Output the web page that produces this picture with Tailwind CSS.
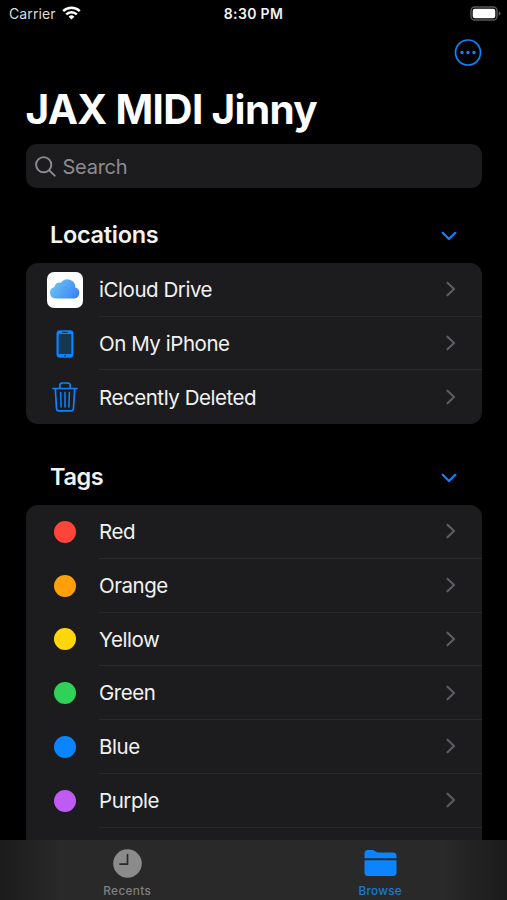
<!DOCTYPE html>
<html lang="en">
  <head>
    <meta charset="UTF-8" />
    <meta name="viewport" content="width=device-width, initial-scale=1.0" />
    <title>JAX MIDI Jinny</title>
    <script src="https://cdn.jsdelivr.net/npm/@tailwindcss/browser@4"></script>
  </head>
  <body class="bg-black">
    <!-- Shared icons -->
    <svg class="hidden">
      <symbol id="chevron-right" viewBox="0 0 10 16">
        <path d="M1.500 1.700 8 8l-6.500 6.300" fill="none" stroke="currentColor" stroke-width="2.200" stroke-linecap="round" stroke-linejoin="round" />
      </symbol>
      <symbol id="chevron-down" viewBox="0 0 16 10">
        <path d="M1.700 1.800 8 8l6.300-6.200" fill="none" stroke="currentColor" stroke-width="2.200" stroke-linecap="round" stroke-linejoin="round" />
      </symbol>
    </svg>

    <div class="flex h-[900px] w-[507px] flex-col overflow-hidden bg-black font-[Inter,sans-serif] text-[#f2f2f2]">
      <!-- Status bar -->
      <header class="grid h-7 shrink-0 grid-cols-3 items-center pr-[6px] pl-[9px] text-[14px] leading-none">
        <div class="flex items-center gap-[6px]">
          <span class="tracking-[0.1px] text-[#dcdcdc]">Carrier</span>
          <svg class="-mt-[2px] h-[14px] w-[19px]" viewBox="0 0 19 14" fill="none" stroke="white" stroke-width="2.400">
            <path d="M1.200 5.200a11.800 11.800 0 0 1 16.600 0" />
            <path d="M4.200 8.400a7.500 7.500 0 0 1 10.600 0" />
            <path d="M9.500 13.600 6.600 10.700a4.100 4.100 0 0 1 5.800 0z" fill="white" stroke="none" />
          </svg>
        </div>
        <span class="pr-[3px] text-center font-semibold tracking-[0.350px] whitespace-nowrap">8:30 PM</span>
        <svg class="-mt-px h-[15px] w-[31px] justify-self-end" viewBox="0 0 31 15">
          <rect x="1" y="1" width="26" height="13" rx="3.800" fill="none" stroke="#5a5a5a" stroke-width="1.400" />
          <rect x="2.700" y="2.700" width="22.600" height="9.600" rx="2.200" fill="white" />
          <path d="M28.600 5.200q2 .9 2 2.300t-2 2.300z" fill="#5a5a5a" />
        </svg>
      </header>

      <main class="min-h-0 flex-1 overflow-hidden px-[25.500px]">
        <div class="flex h-[50px] items-center justify-end">
          <svg class="h-7 w-7" viewBox="0 0 28 28">
            <circle cx="14" cy="13.500" r="12.500" fill="none" stroke="#0a84ff" stroke-width="1.700" />
            <g fill="#0a84ff">
              <circle cx="8" cy="13.500" r="1.700" />
              <circle cx="14" cy="13.500" r="1.700" />
              <circle cx="20" cy="13.500" r="1.700" />
            </g>
          </svg>
        </div>

        <h1 class="h-[66px] text-[40.500px] leading-[63px] font-bold tracking-[-0.650px] whitespace-nowrap text-white">JAX MIDI Jinny</h1>

        <div class="flex h-[44px] items-center gap-[7px] rounded-[11px] bg-[#1c1c1e] pl-[9px] text-[#8c8c90]">
          <svg class="h-[21px] w-[21px]" viewBox="0 0 21 21" fill="none" stroke="currentColor" stroke-width="1.900" stroke-linecap="round">
            <circle cx="8.700" cy="8.700" r="7.600" />
            <path d="m14.300 14.300 5.400 5.400" />
          </svg>
          <span class="pt-px text-[20px] leading-none tracking-[-0.250px]">Search</span>
        </div>

        <!-- Locations -->
        <section>
          <div class="flex h-[75px] items-center justify-between pt-[18px] pr-[25px] pl-[24.500px]">
            <h2 class="text-[23.500px] leading-none font-semibold tracking-[-0.300px]">Locations</h2>
            <svg class="mt-[2px] h-[10px] w-4 text-[#0a84ff]"><use href="#chevron-down" /></svg>
          </div>
          <ul class="overflow-hidden rounded-[12px] bg-[#1c1c1e] text-[20.500px] leading-none tracking-[-0.450px]">
            <li class="flex h-[53.700px] items-center">
              <div class="flex w-[73.500px] justify-center pl-[5px]">
                <svg class="h-9 w-9" viewBox="0 0 36 36">
                  <defs>
                    <linearGradient id="cloud" x1="0" y1="0.200" x2="1" y2="0.700">
                      <stop offset="0" stop-color="#6fc6f5" />
                      <stop offset="1" stop-color="#3a86f6" />
                    </linearGradient>
                  </defs>
                  <rect width="36" height="36" rx="7" fill="white" />
                  <path d="M9 26.500a5.900 5.900 0 0 1-1.600-11.600 5.200 5.200 0 0 1 6.500-4.200 7.900 7.900 0 0 1 14.400 4.700 5.700 5.700 0 0 1-.9 11.100z" fill="url(#cloud)" />
                </svg>
              </div>
              <div class="flex h-full flex-1 items-center justify-between border-b border-[#29292b] pr-[26px]">
                <span class="pt-[2px]">iCloud Drive</span>
                <svg class="h-4 w-[10px] text-[#5c5c60]"><use href="#chevron-right" /></svg>
              </div>
            </li>
            <li class="flex h-[53.700px] items-center">
              <div class="flex w-[73.500px] justify-center pl-[5px]">
                <svg class="h-[28px] w-[18px]" viewBox="0 0 18 28">
                  <rect x="0.500" y="0.300" width="17" height="27.400" rx="3.400" fill="#0a84ff" />
                  <rect x="2.700" y="4" width="12.600" height="20" fill="#17364f" />
                  <path d="M6.500 2.300h5" stroke="#17364f" stroke-width="1.200" stroke-linecap="round" />
                  <circle cx="9" cy="25.800" r="1" fill="#17364f" />
                </svg>
              </div>
              <div class="flex h-full flex-1 items-center justify-between border-b border-[#29292b] pr-[26px]">
                <span class="pt-[2px]">On My iPhone</span>
                <svg class="h-4 w-[10px] text-[#5c5c60]"><use href="#chevron-right" /></svg>
              </div>
            </li>
            <li class="flex h-[53.700px] items-center">
              <div class="flex w-[73.500px] justify-center pl-[5px]">
                <svg class="h-[30px] w-[26px]" viewBox="0 0 26 30" fill="none" stroke="#0a84ff" stroke-width="1.700" stroke-linecap="round" stroke-linejoin="round">
                  <path d="M1 6.500h24M3.300 6.500l1.200 19.700q.2 2.700 2.700 2.700h11.600q2.500 0 2.700-2.700l1.200-19.700M7.800 6.200V3.500Q7.800 1 10.300 1h5.400q2.500 0 2.500 2.500v2.700" />
                  <path d="m8.600 10.500.5 14.500M13 10.500V25M17.400 10.500 16.900 25" stroke-width="1.500" />
                </svg>
              </div>
              <div class="flex h-full flex-1 items-center justify-between pr-[26px]">
                <span class="pt-[2px]">Recently Deleted</span>
                <svg class="h-4 w-[10px] text-[#5c5c60]"><use href="#chevron-right" /></svg>
              </div>
            </li>
          </ul>
        </section>

        <!-- Tags -->
        <section>
          <div class="flex h-[81px] items-center justify-between pt-[25px] pr-[25px] pl-[24.500px]">
            <h2 class="text-[23.500px] leading-none font-semibold tracking-[-0.400px]">Tags</h2>
            <svg class="mt-[2px] h-[10px] w-4 text-[#0a84ff]"><use href="#chevron-down" /></svg>
          </div>
          <ul class="overflow-hidden rounded-[12px] bg-[#1c1c1e] text-[20.500px] leading-none tracking-[-0.450px]">
            <li class="flex h-[53.750px] items-center">
              <div class="flex w-[73.500px] justify-center pl-[5px]"><span class="h-[22px] w-[22px] rounded-full bg-[#ff453a]"></span></div>
              <div class="flex h-full flex-1 items-center justify-between border-b border-[#29292b] pr-[26px]">
                <span class="pt-[2px]">Red</span>
                <svg class="h-4 w-[10px] text-[#5c5c60]"><use href="#chevron-right" /></svg>
              </div>
            </li>
            <li class="flex h-[53.750px] items-center">
              <div class="flex w-[73.500px] justify-center pl-[5px]"><span class="h-[22px] w-[22px] rounded-full bg-[#ff9f0a]"></span></div>
              <div class="flex h-full flex-1 items-center justify-between border-b border-[#29292b] pr-[26px]">
                <span class="pt-[2px]">Orange</span>
                <svg class="h-4 w-[10px] text-[#5c5c60]"><use href="#chevron-right" /></svg>
              </div>
            </li>
            <li class="flex h-[53.750px] items-center">
              <div class="flex w-[73.500px] justify-center pl-[5px]"><span class="h-[22px] w-[22px] rounded-full bg-[#ffd60a]"></span></div>
              <div class="flex h-full flex-1 items-center justify-between border-b border-[#29292b] pr-[26px]">
                <span class="pt-[2px]">Yellow</span>
                <svg class="h-4 w-[10px] text-[#5c5c60]"><use href="#chevron-right" /></svg>
              </div>
            </li>
            <li class="flex h-[53.750px] items-center">
              <div class="flex w-[73.500px] justify-center pl-[5px]"><span class="h-[22px] w-[22px] rounded-full bg-[#30d158]"></span></div>
              <div class="flex h-full flex-1 items-center justify-between border-b border-[#29292b] pr-[26px]">
                <span class="pt-[2px]">Green</span>
                <svg class="h-4 w-[10px] text-[#5c5c60]"><use href="#chevron-right" /></svg>
              </div>
            </li>
            <li class="flex h-[53.750px] items-center">
              <div class="flex w-[73.500px] justify-center pl-[5px]"><span class="h-[22px] w-[22px] rounded-full bg-[#0a84ff]"></span></div>
              <div class="flex h-full flex-1 items-center justify-between border-b border-[#29292b] pr-[26px]">
                <span class="pt-[2px]">Blue</span>
                <svg class="h-4 w-[10px] text-[#5c5c60]"><use href="#chevron-right" /></svg>
              </div>
            </li>
            <li class="flex h-[53.750px] items-center">
              <div class="flex w-[73.500px] justify-center pl-[5px]"><span class="h-[22px] w-[22px] rounded-full bg-[#bf5af2]"></span></div>
              <div class="flex h-full flex-1 items-center justify-between border-b border-[#29292b] pr-[26px]">
                <span class="pt-[2px]">Purple</span>
                <svg class="h-4 w-[10px] text-[#5c5c60]"><use href="#chevron-right" /></svg>
              </div>
            </li>
            <li class="h-[53.750px]"></li>
          </ul>
        </section>
      </main>

      <!-- Tab bar -->
      <nav class="grid h-[60.500px] shrink-0 grid-cols-2 bg-linear-to-r from-[#1b1b1b] via-[#292929] via-12% to-[#292929] to-82% text-[11.800px] leading-none font-medium">
        <div class="flex flex-col items-center pt-[9px] pl-px text-[#808080]">
          <svg class="h-[29px] w-[29px]" viewBox="0 0 29 29">
            <circle cx="14.500" cy="14.500" r="14.300" fill="#8b8b8b" />
            <path d="M14.500 5.500v9.700H7" fill="none" stroke="#2a2a2a" stroke-width="1.700" stroke-linecap="round" stroke-linejoin="round" />
          </svg>
          <span class="mt-[8px] tracking-[0.350px]">Recents</span>
        </div>
        <div class="flex flex-col items-center bg-linear-to-r from-transparent from-75% to-[#1b1b1b] pt-[9px] text-[#1a78d6]">
          <svg class="h-[29px] w-[33px]" viewBox="0 0 33 29" fill="#0a84ff">
            <path d="M.5 9.300V4.500q0-3.500 3.500-3.500h4.500q1.400 0 2.400.9l1 .9q.9.800 2.300.8H29q3.500 0 3.500 3.500v2.200z" />
            <path d="M.5 11.200h32v12.300q0 3.500-3.500 3.500H4q-3.500 0-3.500-3.500z" />
          </svg>
          <span class="mt-[8px] tracking-[0.200px]">Browse</span>
        </div>
      </nav>
    </div>
  </body>
</html>
